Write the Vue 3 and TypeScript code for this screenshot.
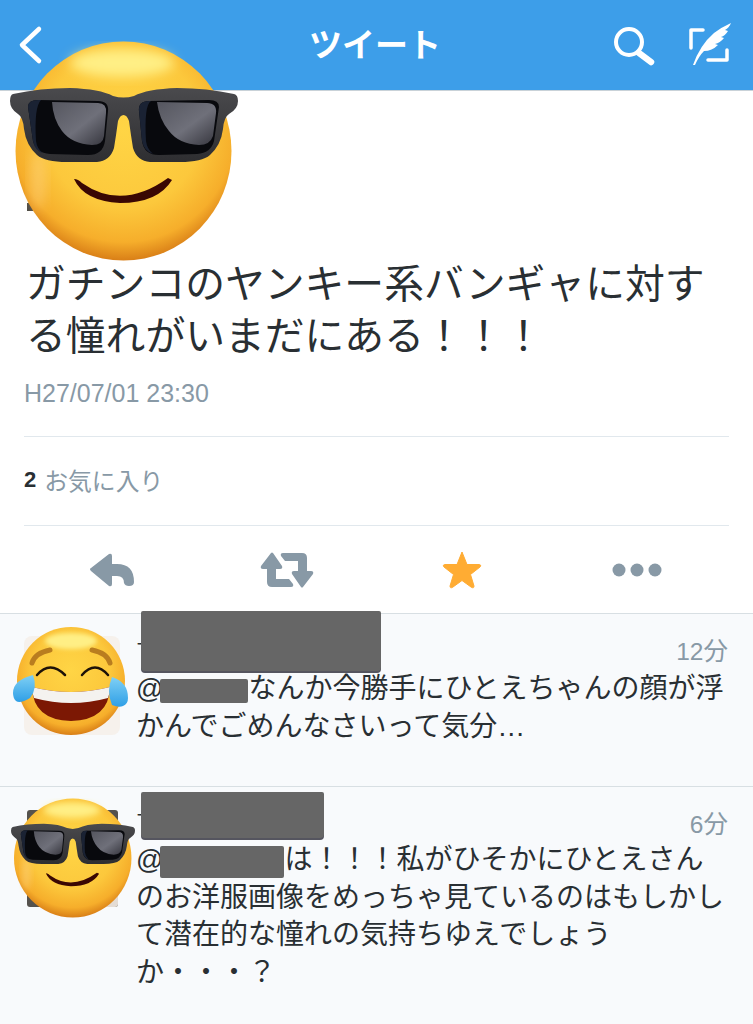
<template>
  <div class="page">
    <!-- shared emoji drawings -->
    <svg class="defs" width="0" height="0" aria-hidden="true">
      <defs>
        <radialGradient id="faceFill" cx="50%" cy="40%" r="60%">
          <stop offset="0" stop-color="#ffd545" />
          <stop offset="0.6" stop-color="#fcc83c" />
          <stop offset="0.86" stop-color="#f6ae2b" />
          <stop offset="1" stop-color="#d97f17" />
        </radialGradient>
        <linearGradient id="frameFill" x1="0" y1="0" x2="0" y2="1">
          <stop offset="0" stop-color="#4a4a4d" />
          <stop offset="1" stop-color="#2e2e31" />
        </linearGradient>
        <linearGradient id="lensShine" x1="0" y1="0" x2="1" y2="1">
          <stop offset="0" stop-color="#55565f" />
          <stop offset="0.55" stop-color="#6f707a" />
          <stop offset="1" stop-color="#35353d" />
        </linearGradient>
        <linearGradient id="tearFill" x1="0" y1="0" x2="0" y2="1">
          <stop offset="0" stop-color="#7fd0f5" />
          <stop offset="1" stop-color="#2f9fe6" />
        </linearGradient>
        <filter id="soft" x="-30%" y="-30%" width="160%" height="160%">
          <feGaussianBlur stdDeviation="6" />
        </filter>
        <filter id="softSmall" x="-30%" y="-30%" width="160%" height="160%">
          <feGaussianBlur stdDeviation="2" />
        </filter>

        <symbol id="coolEmoji" viewBox="0 0 228 220">
          <ellipse cx="113.5" cy="110" rx="108" ry="109.5" fill="url(#faceFill)" />
          <ellipse cx="112" cy="22" rx="52" ry="14" fill="#ffef85" filter="url(#soft)" />
          <ellipse cx="28" cy="138" rx="8" ry="30" fill="#ffd98c" opacity="0.45" filter="url(#soft)" />
          <!-- glasses -->
          <path
            d="M3 53 Q30 47 60 47 Q90 48 103 55 Q113.500 58 124 55 Q137 48 167 47 Q197 47 224 53 Q228 54 228 60 Q228 68 219 73 Q214 76 213 88 Q211 104 200 114 Q192 121 170 121 L140 121 Q127 120 123 107 Q121 95 119 80 Q117 74 113.500 74 Q110 74 108 80 Q106 95 104 107 Q100 120 87 121 L57 121 Q35 121 27 114 Q16 104 14 88 Q13 76 8 73 Q0 68 0 60 Q0 54 3 53Z"
            fill="url(#frameFill)"
          />
          <path d="M18 66 Q18 59 28 59 L88 60 Q99 60 98 70 L95 100 Q93 114 78 114 L40 113 Q26 112 23 100Z" fill="#08090d" />
          <path d="M18 66 Q18 59 28 59 L31 59 Q24 66 26 100 Q27 108 33 112 Q25 110 23 100Z" fill="#1a2233" />
          <path d="M42 61 L88 62 Q97 62 96 72 L94 95 Q93 104 82 104 Q62 103 52 90 Q43 78 42 61Z" fill="url(#lensShine)" />
          <path d="M209 66 Q209 59 199 59 L139 60 Q128 60 129 70 L132 100 Q134 114 149 114 L187 113 Q201 112 204 100Z" fill="#08090d" />
          <path d="M129 70 Q128 60 139 60 L141 60 Q134 64 136 100 Q137 108 143 113 Q134 110 132 100Z" fill="#1a2233" />
          <path d="M147 61 L197 62 Q207 62 206 72 L203 95 Q200 104 189 104 Q169 103 159 90 Q149 78 147 61Z" fill="url(#lensShine)" />
          <path d="M64 138 Q68 138 72 142 Q112 170 158 137 L162 139 Q148 162 110 162 Q74 160 64 138Z" fill="#3a0703" />
        </symbol>

        <symbol id="laughEmoji" viewBox="0 0 115 111">
          <rect x="11" y="10" width="96" height="99" rx="8" fill="#f6f1ec" />
          <circle cx="58" cy="55" r="54" fill="url(#faceFill)" />
          <ellipse cx="58" cy="15" rx="26" ry="8" fill="#ffef85" filter="url(#softSmall)" />
          <path d="M19 37 Q22 27 37 24 M79 24 Q94 27 97 37" fill="none" stroke="#b97d1f" stroke-width="5" stroke-linecap="round" />
          <path d="M24 49 Q37 34 52 49 M69 49 Q82 34 95 49" fill="none" stroke="#1d1208" stroke-width="2.500" stroke-linecap="round" />
          <path d="M19 61 Q58 71 97 61 Q96 94 58 95 Q20 94 19 61Z" fill="#7c1804" />
          <path d="M19 61 Q58 71 97 61 Q97 67 95 72 Q58 82 21 72 Q19 67 19 61Z" fill="#f4f2ef" />
          <path d="M0 67 Q0 54 20 49 Q25 62 17 72 Q7 78 3 75 Q0 72 0 67Z" fill="url(#tearFill)" />
          <path d="M115 72 Q115 56 99 51 Q93 65 99 79 Q106 82 110 80 Q115 78 115 72Z" fill="url(#tearFill)" />
        </symbol>
      </defs>
    </svg>

    <header class="topbar">
      <svg class="icon-back" width="30" height="50" viewBox="15 20 30 50" aria-hidden="true">
        <path d="M39 29 L22 45 L39 61" fill="none" stroke="#fff" stroke-width="4.500" stroke-linecap="round" stroke-linejoin="round" />
      </svg>
      <h1 class="topbar-title">ツイート</h1>
      <div class="topbar-actions">
        <svg width="50" height="50" viewBox="610 20 50 50" aria-hidden="true">
          <circle cx="629" cy="42" r="13" fill="none" stroke="#fff" stroke-width="4" />
          <path d="M639 53 L651 62" stroke="#fff" stroke-width="6.500" stroke-linecap="round" />
        </svg>
        <svg width="50" height="50" viewBox="685 20 50 50" aria-hidden="true">
          <path d="M703 30 L691 30 L691 48 M708 60 L727 60 L727 50" fill="none" stroke="#fff" stroke-width="3.500" stroke-linecap="round" stroke-linejoin="round" />
          <path
            d="M693 65 Q700 45 714 33 Q722 27 731 23 Q729 28 725 30 L728 31 Q725 36 721 37 L724 38 Q720 43 715 44 L718 45 Q712 51 704 51 Q699 56 695 65Z"
            fill="#fff"
          />
        </svg>
      </div>
    </header>

    <svg class="hero-emoji" width="228" height="220" aria-hidden="true">
      <rect x="17" y="162" width="6" height="8" fill="#4d4a45" />
      <use href="#coolEmoji" />
    </svg>

    <section class="tweet">
      <div class="tweet-author"></div>
      <p class="tweet-text">ガチンコのヤンキー系バンギャに対する憧れがいまだにある&#xFF01;&#xFF01;&#xFF01;</p>
      <div class="tweet-time">H27/07/01 23:30</div>
      <div class="tweet-stats"><b>2</b> お気に入り</div>
      <div class="tweet-actions">
        <svg width="46" height="34" viewBox="0 0 46 34" aria-hidden="true">
          <path d="M20 1 L2 15 Q0 16 2 18 L20 33 Q23 34 23 31 V23 H28 Q35 23 35 30 Q36 33 40 33 Q45 33 45 29 Q45 11 28 11 H23 V3 Q23 0 20 1Z" fill="#8899a6" />
        </svg>
        <svg width="54" height="36" viewBox="0 0 54 36" aria-hidden="true">
          <path d="M11 1 L1 14 Q0 17 3 17 H7 V30 Q7 35 12 35 H31 Q34 35 33 32 L29 27 H16 V17 H20 Q23 17 22 14 L13 1 Q12 0 11 1Z" fill="#8899a6" />
          <path d="M43 35 L53 22 Q54 19 51 19 H47 V6 Q47 1 42 1 H23 Q20 1 21 4 L25 9 H38 V19 H34 Q31 19 32 22 L41 35 Q42 36 43 35Z" fill="#8899a6" />
        </svg>
        <svg width="40" height="38" viewBox="0 0 40 38" aria-hidden="true">
          <path d="M20 1 L25 13.500 H37 Q40 14 38 16 L28.500 23.500 L32 35 Q32 38 29 36 L20 29.500 L11 36 Q8 38 8 35 L11.500 23.500 L2 16 Q0 14 3 13.500 H15Z" fill="#ffac33" stroke="#ffac33" stroke-width="1" stroke-linejoin="round" />
        </svg>
        <svg width="50" height="16" viewBox="0 0 50 16" aria-hidden="true">
          <circle cx="7" cy="8" r="6.500" fill="#8899a6" />
          <circle cx="25" cy="8" r="6.500" fill="#8899a6" />
          <circle cx="43" cy="8" r="6.500" fill="#8899a6" />
        </svg>
      </div>
    </section>

    <section class="replies">
      <article v-for="reply in replies" :key="reply.time" class="reply">
        <div class="reply-avatar">
          <svg :class="reply.avatarClass" aria-hidden="true">
            <g v-if="reply.avatar === '#coolEmoji'">
              <rect x="16" y="12" width="91" height="97" rx="3" fill="#55524d" />
              <rect x="60" y="70" width="47" height="39" rx="3" fill="#e4dcd4" />
            </g>
            <use :href="reply.avatar" />
          </svg>
        </div>
        <div class="reply-main">
          <div class="reply-head">
            <span class="reply-name">ー</span>
            <span class="reply-time">{{ reply.time }}</span>
            <span class="redact-name" :style="{ width: reply.nameWidth + 'px', height: reply.nameHeight + 'px', top: reply.nameTop + 'px' }"></span>
          </div>
          <p class="reply-text">
            <span class="line"><span class="at">@</span><span class="redact-at" :style="{ width: reply.atWidth + 'px', height: reply.atHeight + 'px' }"></span>{{ reply.lines[0] }}</span>
            <span v-for="line in reply.lines.slice(1)" :key="line" class="line">{{ line }}</span>
          </p>
        </div>
      </article>
    </section>
  </div>
</template>

<script setup lang="ts">
interface Reply {
  avatar: string
  avatarClass: string
  time: string
  nameWidth: number
  nameHeight: number
  nameTop: number
  atWidth: number
  atHeight: number
  lines: string[]
}

const replies: Reply[] = [
  {
    avatar: '#laughEmoji',
    avatarClass: 'avatar-laugh',
    time: '12分',
    nameWidth: 240,
    nameHeight: 60,
    nameTop: -5,
    atWidth: 88,
    atHeight: 24,
    lines: ['なんか今勝手にひとえちゃんの顔が浮', 'かんでごめんなさいって気分…'],
  },
  {
    avatar: '#coolEmoji',
    avatarClass: 'avatar-cool',
    time: '6分',
    nameWidth: 183,
    nameHeight: 46,
    nameTop: 5,
    atWidth: 124,
    atHeight: 32,
    lines: [
      'は\uFF01\uFF01\uFF01私がひそかにひとえさん',
      'のお洋服画像をめっちゃ見ているのはもしかし',
      'て潜在的な憧れの気持ちゆえでしょう',
      'か・・・\uFF1F',
    ],
  },
]
</script>

<style>
html,
body {
  margin: 0;
  background: #fff;
}
</style>

<style scoped>
.page {
  position: relative;
  width: 753px;
  height: 1024px;
  overflow: hidden;
  background: #fff;
  color: #292f33;
  font-family: "Liberation Sans", "Noto Sans CJK JP", sans-serif;
}

.defs {
  position: absolute;
}

.topbar {
  display: grid;
  grid-template-columns: 1fr auto 1fr;
  align-items: center;
  height: 90px;
  padding: 0 18px 0 15px;
  background: #3d9ee9;
  border-bottom: 1px solid #c9d2d8;
}

.icon-back {
  display: block;
}

.topbar-title {
  margin: 2px 0 0;
  color: #fff;
  font-size: 33px;
  font-weight: 700;
  line-height: 40px;
}

.topbar-actions {
  display: flex;
  justify-content: flex-end;
  gap: 25px;
}

.hero-emoji {
  position: absolute;
  left: 10px;
  top: 41px;
}

.tweet-author {
  height: 167px;
}

.tweet-text {
  margin: 0;
  padding: 0 24px 0 26px;
  font-size: 39.800px;
  line-height: 52px;
}

.tweet-time {
  margin: 16px 24px 0;
  padding-bottom: 28px;
  border-bottom: 1px solid #e1e8ed;
  color: #8899a6;
  font-size: 25px;
  line-height: 30px;
}

.tweet-stats {
  display: flex;
  align-items: center;
  gap: 8px;
  height: 85px;
  margin: 0 24px;
  padding-bottom: 3px;
  border-bottom: 1px solid #e1e8ed;
  color: #8899a6;
  font-size: 23.800px;
}

.tweet-stats b {
  color: #292f33;
  font-size: 22px;
}

.tweet-actions {
  display: grid;
  grid-template-columns: repeat(4, 175px);
  justify-items: center;
  align-items: center;
  height: 87px;
  padding-left: 24px;
}

.replies {
  border-top: 1px solid #d8dfe3;
  background: #f8fafc;
}

.reply {
  display: flex;
  border-bottom: 1px solid #d8dfe3;
}

.reply-avatar {
  flex: 0 0 136px;
  box-sizing: border-box;
}

.reply:first-child .reply-avatar {
  padding: 12px 0 0 13px;
}

.reply:last-child .reply-avatar {
  padding: 11px 0 0 11px;
}

.avatar-laugh {
  display: block;
  width: 115px;
  height: 111px;
}

.avatar-cool {
  display: block;
  width: 124px;
  height: 120px;
}

.reply-main {
  flex: 1;
  padding: 0 25px 41px 0;
}

.reply:first-child .reply-main {
  padding-top: 2px;
}

.reply-head {
  position: relative;
  display: flex;
  justify-content: space-between;
  align-items: flex-end;
  height: 54px;
}

.reply-name {
  font-size: 16px;
  line-height: 50px;
}

.reply-time {
  margin-bottom: 3px;
  color: #8899a6;
  font-size: 24.500px;
  line-height: 30px;
}

.reply:last-child .reply-time {
  margin-bottom: 1px;
}

.redact-name {
  position: absolute;
  left: 5px;
  background: #666;
  border-radius: 2px 2px 4px 4px;
  box-shadow: 0 2px 0 #55555f;
}

.reply-text {
  margin: 0;
  font-size: 28px;
  line-height: 37.500px;
}

.at {
  font-size: 27px;
  letter-spacing: -3px;
}

.line {
  display: block;
  height: 37.500px;
  white-space: nowrap;
}

.redact-at {
  display: inline-block;
  vertical-align: middle;
  background: #666;
  border-radius: 2px;
}
</style>
